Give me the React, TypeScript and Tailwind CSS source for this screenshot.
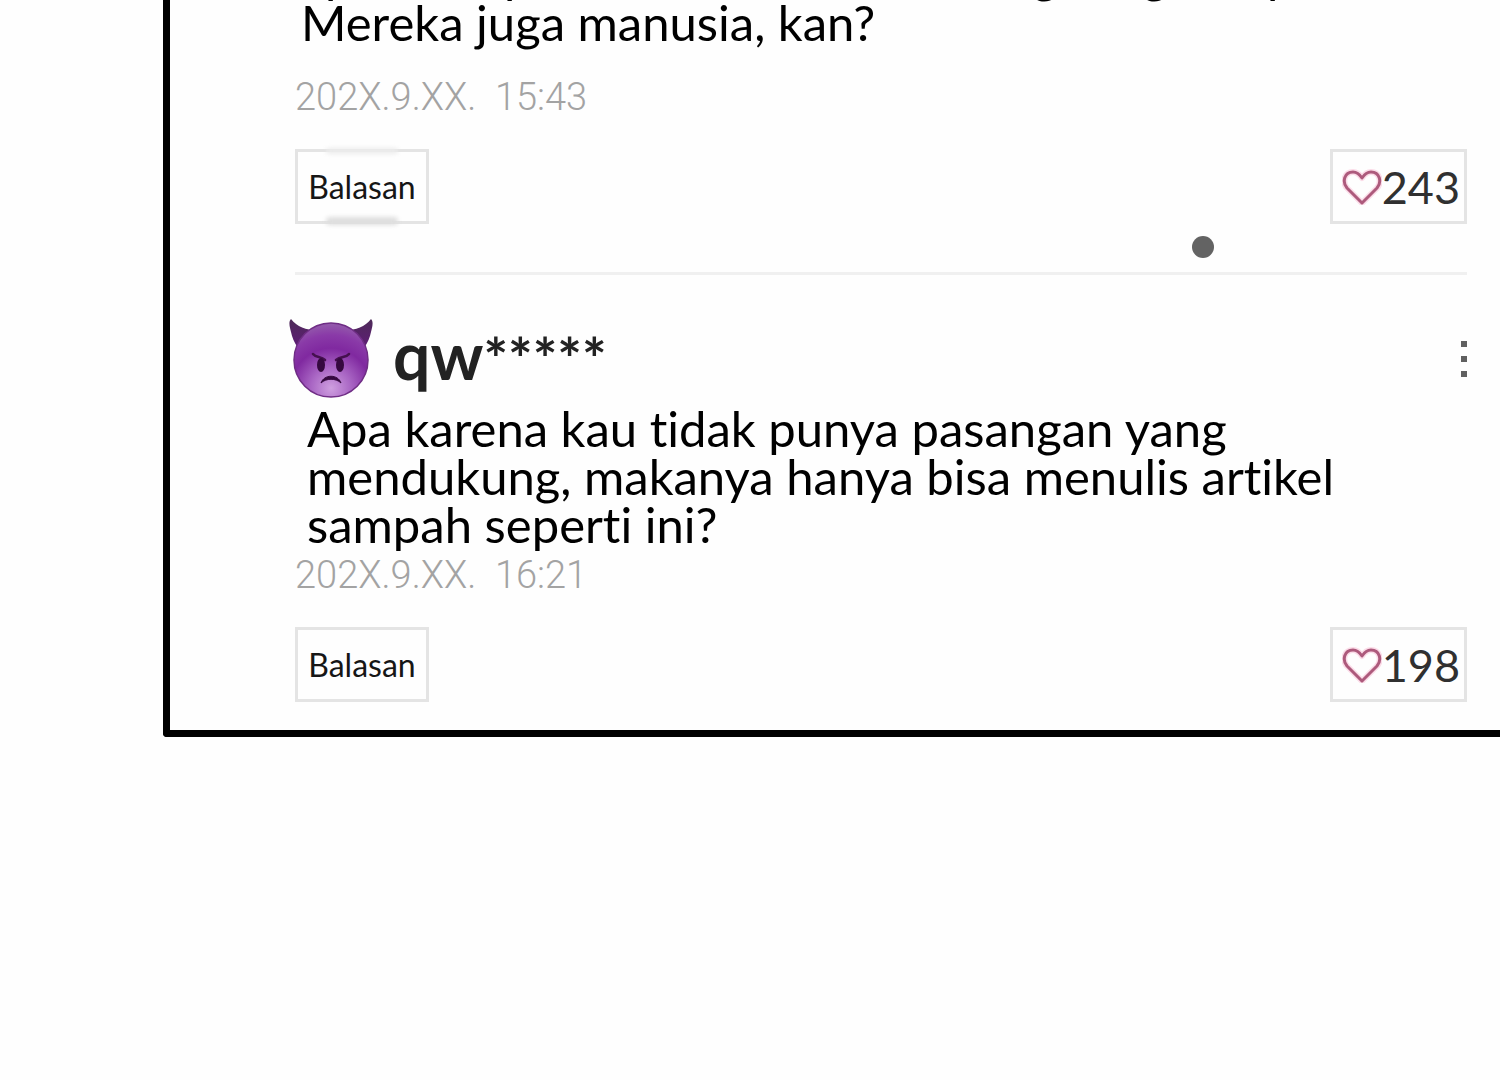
import React from "react";

interface CommentFooterProps {
  date: string;
  likes: number;
  smudged?: boolean;
}

function DevilIcon() {
  return (
    <svg className="h-[82px] w-[84px] shrink-0" viewBox="0 0 84 82" fill="none" role="img" aria-label="Avatar">
      <defs>
        <radialGradient id="face" cx="0.5" cy="0.88" r="0.9">
          <stop offset="0" stopColor="#cf9fe0" />
          <stop offset="0.3" stopColor="#a966c4" />
          <stop offset="0.6" stopColor="#8029a0" />
          <stop offset="0.8" stopColor="#8a3aa8" />
          <stop offset="1" stopColor="#9560ac" />
        </radialGradient>
        <linearGradient id="horn" x1="0" y1="0" x2="0" y2="1">
          <stop offset="0" stopColor="#4d2a58" />
          <stop offset="1" stopColor="#5f1c77" />
        </linearGradient>
      </defs>
      <path d="M2 1C-1 4 1 10 2 14C3 19 5 24 9 30L28 12C17 12 8 9 2 1Z" fill="url(#horn)" />
      <path d="M82 1C85 4 83 10 82 14C81 19 79 24 75 30L56 12C67 12 76 9 82 1Z" fill="url(#horn)" />
      <circle cx="42" cy="42" r="37" fill="url(#face)" stroke="#6f2d85" strokeWidth="1.5" />
      <path d="M24 36C27 40 32 38 36 42" stroke="#45104f" strokeWidth="2.6" strokeLinecap="round" />
      <path d="M60 36C57 40 52 38 47 42" stroke="#45104f" strokeWidth="2.6" strokeLinecap="round" />
      <ellipse cx="32" cy="47" rx="4" ry="7" fill="#35093f" />
      <ellipse cx="51" cy="47" rx="4" ry="7" fill="#35093f" />
      <path d="M32 65C35 56 49 56 52 65C47 60 37 60 32 65Z" fill="#35093f" stroke="#35093f" strokeLinejoin="round" />
    </svg>
  );
}

function HeartIcon() {
  return (
    <svg className="h-9 w-10 shrink-0" viewBox="0 0 40 36" fill="none" strokeLinejoin="round" aria-hidden="true">
      <path
        d="M20 34L5 19C0 13 2 3 11 3C15 3 18 6 20 9C22 6 25 3 29 3C38 3 40 13 35 19Z"
        stroke="#fbdce8"
        strokeWidth="6"
      />
      <path
        d="M20 34L5 19C0 13 2 3 11 3C15 3 18 6 20 9C22 6 25 3 29 3C38 3 40 13 35 19Z"
        stroke="#ad5a7c"
        strokeWidth="3"
      />
    </svg>
  );
}

function CommentFooter({ date, likes, smudged }: CommentFooterProps) {
  return (
    <>
      <time className="block font-[Roboto,sans-serif] text-[38px] leading-12 font-light whitespace-pre text-[#a3a3a3]">
        {date}
      </time>
      <div className="mt-7 flex items-center justify-between">
        <button
          type="button"
          className="relative h-[75px] w-[134px] border-3 border-[#e4e4e4] text-[32px] leading-10 text-[#161616]"
        >
          {smudged && (
            <>
              <span className="absolute inset-x-7 -top-1 h-1.5 rounded-full bg-[#ececec] blur-[2px]" />
              <span className="absolute inset-x-7 -bottom-1 h-2 rounded-full bg-[#dedede] blur-[2px]" />
            </>
          )}
          Balasan
        </button>
        <button
          type="button"
          aria-label={`Suka ${likes}`}
          className="flex h-[75px] w-[137px] items-center justify-end border-3 border-[#e4e4e4] pr-1 text-[45px] leading-12 text-[#303030]"
        >
          <HeartIcon />
          <span>{likes}</span>
        </button>
      </div>
    </>
  );
}

export default function App() {
  return (
    <div className="min-h-screen bg-[#fefefe] pl-[163px] font-[Lato,sans-serif]">
      <main className="overflow-hidden rounded-bl-sm border-b-7 border-l-7 border-black bg-[#fefefe] pr-[33px] pb-7 pl-[125px]">
        <article className="-mt-[50px]">
          <div className="pl-1.5 text-[49px] leading-12 text-black">
            {/* tail of the line scrolled off the top */}
            <div className="grid grid-cols-[179px_528px_110px_125px_1fr] pl-6" aria-hidden="true">
              <span>p</span>
              <span>p</span>
              <span>g</span>
              <span>g</span>
              <span>p</span>
            </div>
            <p>Mereka juga manusia, kan?</p>
          </div>
          <div className="mt-[27px]">
            <CommentFooter date="202X.9.XX.  15:43" likes={243} smudged />
          </div>
        </article>

        <div className="mt-3 flex justify-end pr-[253px]">
          <span className="size-[22px] rounded-full bg-[#636363]" />
        </div>
        <hr className="mt-3.5 border-t-3 border-[#f0f0f0]" />

        <article className="mt-[43px]">
          <header className="-ml-1.5 flex h-[82px] items-center">
            <DevilIcon />
            <h2 className="ml-5 self-start text-[66px] leading-[74px] font-bold text-[#222222]">
              qw<span className="text-[58px]">*****</span>
            </h2>
            <button type="button" aria-label="Menu" className="ml-auto flex w-1.5 flex-col gap-[9px]">
              <span className="size-1.5 bg-[#606060]" />
              <span className="size-1.5 bg-[#606060]" />
              <span className="size-1.5 bg-[#606060]" />
            </button>
          </header>
          <p className="mt-1 mb-[3px] max-w-[1060px] pl-3 text-[49px] leading-12 text-black [font-variant-ligatures:none]">
            Apa karena kau tidak punya pasangan yang mendukung, makanya hanya bisa menulis artikel sampah seperti ini?
          </p>
          <CommentFooter date="202X.9.XX.  16:21" likes={198} />
        </article>
      </main>
    </div>
  );
}
